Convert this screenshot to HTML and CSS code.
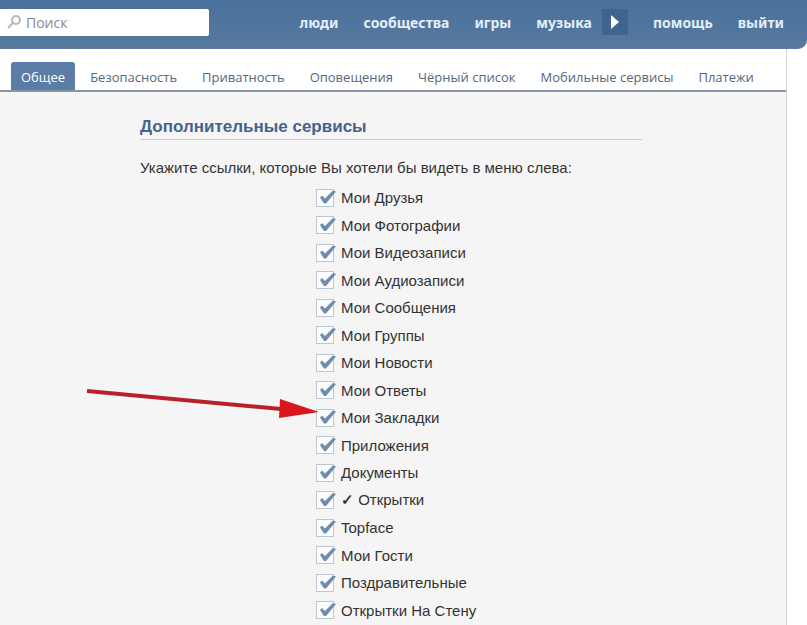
FILE: index.html
```html
<!DOCTYPE html>
<html lang="ru">
<head>
    <meta charset="UTF-8">
    <meta name="viewport" content="width=device-width, initial-scale=1.0">
    <title>Мои настройки</title>
    <link rel="stylesheet" href="styles.css">
</head>
<body>
    <header class="header">
        <label class="search">
            <svg class="search-icon" viewBox="0 0 14 14" width="14" height="14" aria-hidden="true">
                <circle cx="9" cy="5" r="4" fill="none" stroke="#b4b8c0" stroke-width="2"/>
                <path d="M6 8L1 13" stroke="#b4b8c0" stroke-width="2"/>
            </svg>
            <input class="search-input" type="text" placeholder="Поиск" aria-label="Поиск">
        </label>
        <nav class="menu">
            <a href="#">люди</a>
            <a href="#">сообщества</a>
            <a href="#">игры</a>
            <div class="music">
                <a href="#">музыка</a>
                <button class="play" type="button" aria-label="Слушать">
                    <svg viewBox="0 0 8 14" width="8" height="14" aria-hidden="true">
                        <path d="M0 0L8 7L0 14Z" fill="#fff"/>
                    </svg>
                </button>
            </div>
            <a href="#">помощь</a>
            <a href="#">выйти</a>
        </nav>
    </header>

    <main class="page">
        <nav class="tabs">
            <a class="tab active" href="#">Общее</a>
            <a class="tab" href="#">Безопасность</a>
            <a class="tab" href="#">Приватность</a>
            <a class="tab" href="#">Оповещения</a>
            <a class="tab" href="#">Чёрный список</a>
            <a class="tab" href="#">Мобильные сервисы</a>
            <a class="tab" href="#">Платежи</a>
        </nav>

        <section class="settings">
            <h1>Дополнительные сервисы</h1>
            <p>Укажите ссылки, которые Вы хотели бы видеть в меню слева:</p>
            <div class="services">
                <label><input type="checkbox" checked>Мои Друзья</label>
                <label><input type="checkbox" checked>Мои Фотографии</label>
                <label><input type="checkbox" checked>Мои Видеозаписи</label>
                <label><input type="checkbox" checked>Мои Аудиозаписи</label>
                <label><input type="checkbox" checked>Мои Сообщения</label>
                <label><input type="checkbox" checked>Мои Группы</label>
                <label><input type="checkbox" checked>Мои Новости</label>
                <label><input type="checkbox" checked>Мои Ответы</label>
                <label class="marked"><input type="checkbox" checked>Мои Закладки
                    <svg class="arrow" viewBox="0 0 232 34" width="232" height="34" aria-hidden="true">
                        <path d="M0 6L194 24" stroke="#b9202a" stroke-width="4"/>
                        <path d="M193 14L232 27L192 33Z" fill="#d9161c"/>
                    </svg>
                </label>
                <label><input type="checkbox" checked>Приложения</label>
                <label><input type="checkbox" checked>Документы</label>
                <label><input type="checkbox" checked><span><b>✓</b> Открытки</span></label>
                <label><input type="checkbox" checked>Topface</label>
                <label><input type="checkbox" checked>Мои Гости</label>
                <label><input type="checkbox" checked>Поздравительные</label>
                <label><input type="checkbox" checked>Открытки На Стену</label>
            </div>
        </section>
    </main>
</body>
</html>
```

FILE: styles.css
```css
* {
    box-sizing: border-box;
}

body {
    margin: 0;
    background-color: #fff;
    color: #333;
    font-family: "Liberation Sans", Arial, sans-serif;
    font-size: 15px;
}

a {
    text-decoration: none;
}

/* шапка */
.header {
    display: flex;
    align-items: center;
    justify-content: space-between;
    height: 49px;
    padding: 0 23px 4px 0;
    background: linear-gradient(#49709c, #57799f);
    border-bottom: 1px solid #5b7ca0;
    border-bottom-right-radius: 9px;
}

.search {
    display: flex;
    align-items: center;
    gap: 5px;
    width: 209px;
    height: 27px;
    padding-left: 7px;
    background-color: #fff;
    border-radius: 0 2px 2px 0;
}

.search-input {
    flex: 1;
    min-width: 0;
    padding: 0;
    border: 0;
    outline: 0;
    font-family: "Open Sans", sans-serif;
    font-size: 14px;
}

.search-input::placeholder {
    color: #858a91;
}

.menu {
    display: flex;
    align-items: center;
    gap: 25px;
}

.menu a {
    color: #e4eefa;
    font-family: "Noto Sans", sans-serif;
    font-size: 14px;
    font-weight: bold;
}

.music {
    display: flex;
    align-items: center;
    gap: 10px;
}

.play {
    display: flex;
    align-items: center;
    justify-content: center;
    width: 26px;
    height: 26px;
    padding: 0;
    border: 0;
    background-color: #3f658f;
}

/* вкладки */
.page {
    margin-right: 20px;
    border-right: 1px solid #d3d6da;
}

.tabs {
    display: flex;
    align-items: flex-end;
    height: 43px;
    padding-left: 11px;
    border-bottom: 2px solid #8795a5;
}

.tab {
    height: 28px;
    margin-right: 5px;
    padding: 0 10px;
    color: #55687b;
    font-family: "Open Sans", sans-serif;
    font-size: 13px;
    line-height: 30px;
    white-space: nowrap;
}

.tab.active {
    background-color: #5b7ca6;
    border-radius: 3px 3px 0 0;
    color: #fff;
}

/* список сервисов */
.settings {
    padding: 25px 144px 10px 140px;
    background-color: #f5f5f5;
}

.settings h1 {
    margin: 0;
    padding-bottom: 2px;
    border-bottom: 1px solid #ccc;
    color: #45628a;
    font-size: 17px;
    line-height: 20px;
}

.settings p {
    margin: 18px 0 6px;
    line-height: 20px;
}

.services {
    display: grid;
    grid-auto-rows: 27px 28px;
    padding-left: 176px;
}

.services label {
    display: flex;
    align-items: center;
    gap: 7px;
    white-space: nowrap;
}

.services input {
    appearance: none;
    width: 18px;
    height: 18px;
    margin: 0;
    background-color: #fafcfe;
    border: 1px solid #bcc7d2;
}

.services input:checked::after {
    content: "";
    display: block;
    width: 19px;
    height: 16px;
    background-color: #6f8caa;
    clip-path: polygon(3px 8px, 5px 6px, 8px 9px, 16px 1px, 19px 2px, 9px 14px, 7px 14px);
}

.services .marked {
    position: relative;
}

.arrow {
    position: absolute;
    top: -19px;
    right: 100%;
    margin-right: -3px;
}
```
